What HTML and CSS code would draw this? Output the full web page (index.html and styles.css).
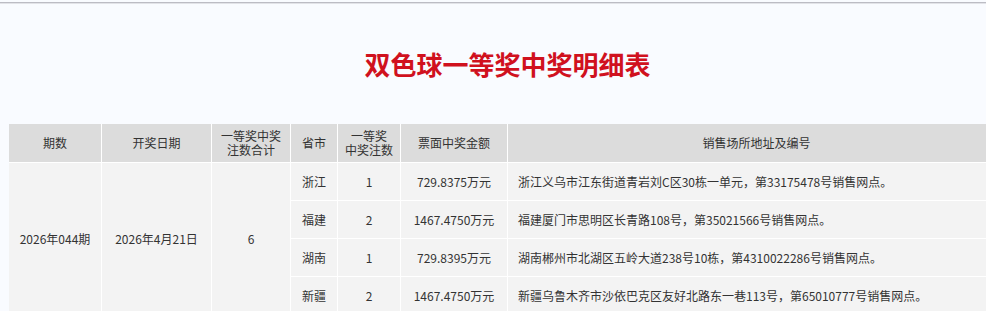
FILE: index.html
```html
<!DOCTYPE html>
<html lang="zh-CN">
<head>
<meta charset="utf-8">
<title>双色球一等奖中奖明细表</title>
<link rel="stylesheet" href="styles.css">
</head>
<body>
<div class="topline"></div>
<div class="page">
  <h1 class="title">双色球一等奖中奖明细表</h1>
  <table class="prize">
    <colgroup>
      <col class="c1"><col class="c2"><col class="c3"><col class="c4"><col class="c5"><col class="c6"><col class="c7">
    </colgroup>
    <thead>
      <tr>
        <th>期数</th>
        <th>开奖日期</th>
        <th>一等奖中奖<br>注数合计</th>
        <th>省市</th>
        <th>一等奖<br>中奖注数</th>
        <th>票面中奖金额</th>
        <th>销售场所地址及编号</th>
      </tr>
    </thead>
    <tbody>
      <tr>
        <td rowspan="4">2026年044期</td>
        <td rowspan="4">2026年4月21日</td>
        <td rowspan="4">6</td>
        <td>浙江</td>
        <td>1</td>
        <td>729.8375万元</td>
        <td class="addr">浙江义乌市江东街道青岩刘C区30栋一单元，第33175478号销售网点。</td>
      </tr>
      <tr>
        <td>福建</td>
        <td>2</td>
        <td>1467.4750万元</td>
        <td class="addr">福建厦门市思明区长青路108号，第35021566号销售网点。</td>
      </tr>
      <tr>
        <td>湖南</td>
        <td>1</td>
        <td>729.8395万元</td>
        <td class="addr">湖南郴州市北湖区五岭大道238号10栋，第4310022286号销售网点。</td>
      </tr>
      <tr>
        <td>新疆</td>
        <td>2</td>
        <td>1467.4750万元</td>
        <td class="addr">新疆乌鲁木齐市沙依巴克区友好北路东一巷113号，第65010777号销售网点。</td>
      </tr>
    </tbody>
  </table>
</div>
</body>
</html>
```

FILE: styles.css
```css
html, body {
  margin: 0;
  padding: 0;
  overflow: hidden;
}
body {
  background: #f9fbff;
  font-family: "Noto Sans CJK SC", "Noto Sans", sans-serif;
  color: #333;
}
.topline {
  margin-top: 2px;
  height: 1px;
  background: #bcbcc4;
  border-bottom: 1px solid #e2e3e8;
}
.page {
  width: 997px;
  padding-left: 9px;
}
.title {
  margin: 0;
  height: 120px;
  display: flex;
  align-items: center;
  justify-content: center;
  font-size: 26px;
  font-weight: 700;
  color: #d0111e;
  letter-spacing: 0;
  line-height: 1;
  padding-bottom: 1px;
  box-sizing: border-box;
}
.prize {
  width: 997px;
  table-layout: fixed;
  border-collapse: separate;
  border-spacing: 0;
  font-size: 12px;
}
.c1 { width: 93px; }
.c2 { width: 110px; }
.c3 { width: 79px; }
.c4 { width: 47px; }
.c5 { width: 63px; }
.c6 { width: 107px; }
.prize th, .prize td {
  border-right: 1px solid #fff;
  border-bottom: 1px solid #fff;
  padding: 0;
  text-align: center;
  vertical-align: middle;
  white-space: nowrap;
}
.prize th {
  background: #dcdcdc;
  font-weight: 400;
  height: 38px;
  line-height: 14px;
  color: #333;
}
.prize td {
  background: #f3f3f3;
  height: 37px;
  line-height: 16px;
}
.prize td.addr {
  text-align: left;
  padding-left: 10px;
}
```
